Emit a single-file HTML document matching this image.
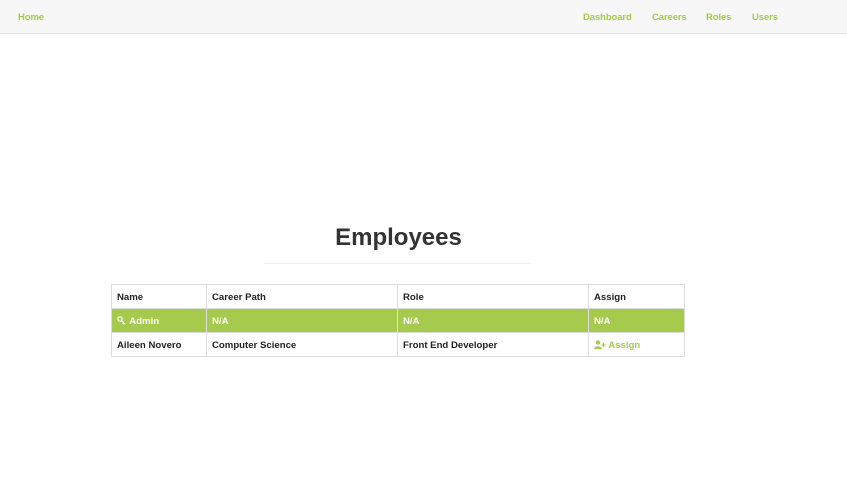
<!DOCTYPE html>
<html><head><style>
*{margin:0;padding:0;box-sizing:border-box}
body{width:847px;height:493px;background:#fff;font-family:"Liberation Sans",sans-serif;position:relative;overflow:hidden}
.nav{position:absolute;left:0;top:0;width:847px;height:34px;background:#f7f7f7;border-bottom:1px solid #e2e2e2}
.nav a{position:absolute;top:12px;font-size:9.5px;font-weight:bold;color:#a6ca4b;text-decoration:none;letter-spacing:-0.1px}
h1{position:absolute;left:0;width:797px;text-align:center;top:224px;font-size:24px;font-weight:bold;color:#333}
.hr{position:absolute;left:264px;top:263px;width:267px;height:1px;background:#eee}
table{position:absolute;left:111px;top:284px;border-collapse:collapse;font-size:9.6px;font-weight:bold;color:#222}
td{border:1px solid #ddd;height:24px;padding:1px 5px 0;vertical-align:middle}
tr.g td{background:#a6ca4b;color:#fff;border-color:#ddd}
.gr{color:#a6ca4b}
</style></head><body>
<div class="nav">
<a style="left:18px">Home</a>
<a style="left:583px">Dashboard</a>
<a style="left:652px">Careers</a>
<a style="left:706px">Roles</a>
<a style="left:752px">Users</a>
</div>
<h1>Employees</h1>
<div class="hr"></div>
<table>
<tr><td style="width:95px">Name</td><td style="width:191px">Career Path</td><td style="width:191px">Role</td><td style="width:96px">Assign</td></tr>
<tr class="g"><td><svg width="10" height="9" viewBox="0 0 10 9" style="vertical-align:-1px"><circle cx="3" cy="3" r="2.2" fill="none" stroke="#fff" stroke-width="1.2"/><path d="M4.5 4.5L8 8M6.5 6.5L5.5 7.5M7.5 7.5L6.5 8.5" stroke="#fff" stroke-width="1.2"/></svg> Admin</td><td>N/A</td><td>N/A</td><td>N/A</td></tr>
<tr><td>Aileen Novero</td><td>Computer Science</td><td>Front End Developer</td><td class="gr"><svg width="12" height="9" viewBox="0 0 12 9" style="vertical-align:-1px"><circle cx="4" cy="2.5" r="2.2" fill="#a6ca4b"/><path d="M0 9C0 5.5 8 5.5 8 9Z" fill="#a6ca4b"/><path d="M9.5 3v4M7.5 5h4" stroke="#a6ca4b" stroke-width="1.3"/></svg> Assign</td></tr>
</table>
</body></html>
